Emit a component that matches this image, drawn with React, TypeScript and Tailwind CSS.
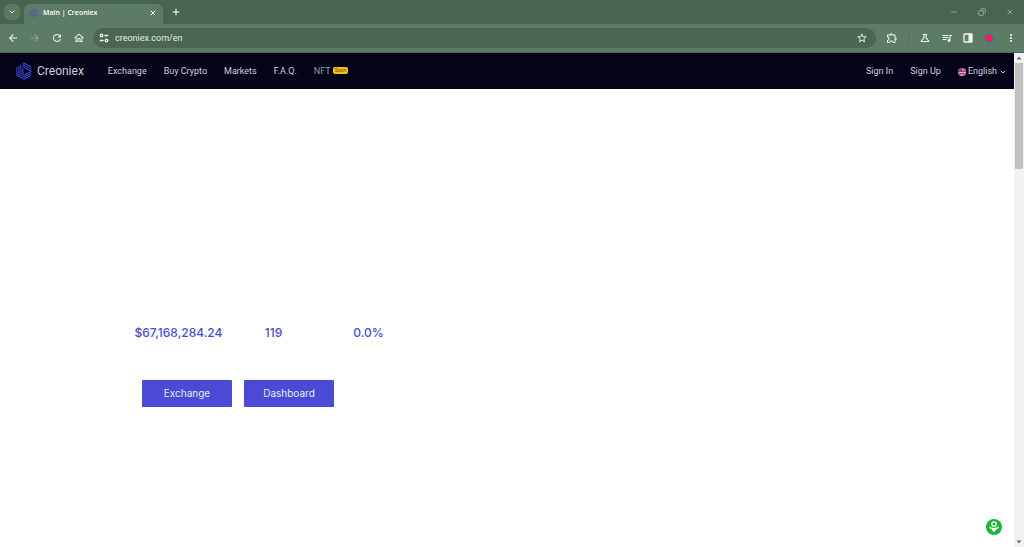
import React from "react";
import { ChevronDown, Copy, Minus, Plus, X } from "lucide-react";
import {
  MdArrowBack,
  MdArrowForward,
  MdMoreVert,
  MdOutlineExtension,
  MdOutlineHome,
  MdOutlineQueueMusic,
  MdOutlineScience,
  MdRefresh,
  MdStarOutline,
} from "react-icons/md";

function BrandMark({ className }: { className: string }) {
  return (
    <svg viewBox="0 0 18 20" className={className} fill="none" stroke="currentColor" strokeWidth="1.2" aria-hidden="true">
      <path d="M1 5.500v9l8 4.700M3.200 4.300v9.200l5.800 3.400M5.400 3v9.300l3.600 2.200M7.600 6.500v4.500l1.400.9" />
      <path d="M7.500 1.200 9 1l8 4.500M7.500 2.600l9.500 5.300M7.600 5l9.400 5.300" />
      <path d="M17 10.300l-8 4.500M17 12.600l-8 4.500M17 14.800l-8 4.500" />
    </svg>
  );
}

function TuneIcon() {
  return (
    <svg viewBox="0 0 12 12" className="size-2.5" fill="none" stroke="currentColor" strokeWidth="1.6" aria-hidden="true">
      <path d="M6.500 3H11M1 9h4.500" />
      <circle cx="3" cy="3" r="1.500" />
      <circle cx="9" cy="9" r="1.500" />
    </svg>
  );
}

function SidePanelIcon() {
  return (
    <svg viewBox="0 0 12 12" className="size-2.5" aria-hidden="true">
      <rect x="1.2" y="1.2" width="9.6" height="9.6" rx="1" fill="none" stroke="currentColor" strokeWidth="1.6" />
      <path d="M6.500 1h4.500v10H6.500z" fill="currentColor" />
    </svg>
  );
}

function FlagIcon() {
  return (
    <svg viewBox="0 0 16 16" className="size-2" aria-hidden="true">
      <circle cx="8" cy="8" r="8" fill="#e9a9ba" />
      <path d="M8 0a8 8 0 0 1 6.200 3H8zM8 5h7.400a8 8 0 0 1 .6 3H8zM.4 10h15.200a8 8 0 0 1-1.800 3H2.200A8 8 0 0 1 .4 10z" fill="#d62f55" />
      <path d="M8 0v8H0a8 8 0 0 1 8-8z" fill="#5a5596" />
    </svg>
  );
}

function TabStrip() {
  return (
    <div className="flex h-6 items-center bg-[#486552] pr-2">
      <button aria-label="Search tabs" className="ml-1 flex size-4 items-center justify-center rounded-md bg-[#5a7963]">
        <ChevronDown className="size-2" strokeWidth={3} />
      </button>
      <div className="ml-1 mt-1 flex h-5 w-[139px] items-center rounded-t-md bg-[#5d7c67] pb-0.5 pl-1.5 pr-1.5">
        <BrandMark className="h-2.5 w-2 text-[#4a55b4]" />
        <span className="ml-[5px] flex-1 text-[7px] font-semibold">Main | Creoniex</span>
        <button aria-label="Close tab"><X className="size-2" strokeWidth={3} /></button>
      </div>
      <button aria-label="New tab" className="ml-2"><Plus className="size-2.5" strokeWidth={2.5} /></button>
      <div className="ml-auto flex items-center gap-5 pr-0.5 text-[#b9c9be]">
        <button aria-label="Minimize"><Minus className="size-2" /></button>
        <button aria-label="Restore"><Copy className="size-2 -scale-x-100" strokeWidth={2} /></button>
        <button aria-label="Close window"><X className="size-2" /></button>
      </div>
    </div>
  );
}

function Toolbar() {
  return (
    <div className="flex h-7 items-center bg-[#5d7c67] text-[#f1f5f2]">
      <div className="flex items-center gap-2.5 pl-[7px]">
        <button aria-label="Back"><MdArrowBack className="size-3" /></button>
        <button aria-label="Forward" className="text-[#90a797]"><MdArrowForward className="size-3" /></button>
        <button aria-label="Reload"><MdRefresh className="size-3" /></button>
        <button aria-label="Home"><MdOutlineHome className="size-3" /></button>
      </div>
      <div className="ml-2 flex h-5 flex-1 items-center rounded-full bg-[#4b6754] pl-1.5 pr-2">
        <button aria-label="Site information"><TuneIcon /></button>
        <input aria-label="Address" defaultValue="creoniex.com/en" className="ml-1.5 min-w-0 flex-1 bg-transparent pt-px font-['Roboto',sans-serif] text-[9px] text-[#e4ece6] outline-none" />
        <button aria-label="Bookmark"><MdStarOutline className="size-3" /></button>
      </div>
      <div className="flex items-center gap-2.5 pl-2.5 pr-[7px]">
        <button aria-label="Extensions"><MdOutlineExtension className="size-3" /></button>
        <span className="h-3 w-px bg-[#536f5c]" />
        <button aria-label="Experiments"><MdOutlineScience className="size-3" /></button>
        <button aria-label="Media controls"><MdOutlineQueueMusic className="size-3" /></button>
        <button aria-label="Side panel"><SidePanelIcon /></button>
        <button aria-label="Profile" className="flex size-3 items-center justify-center rounded-full bg-[#2f8a84]">
          <span className="size-2 rounded-full bg-[#ee1d5a]" />
        </button>
        <button aria-label="Browser menu"><MdMoreVert className="size-3" /></button>
      </div>
    </div>
  );
}

function SiteHeader() {
  return (
    <header className="flex h-9 items-center bg-[#03041a] pl-4 pr-[7px] text-[9px] text-[#cfd0dc]">
      <a href="#home" className="flex items-center gap-[5px] text-xs">
        <BrandMark className="h-5 w-4 text-[#3f46c8]" />
        <span>Creoniex</span>
      </a>
      <nav className="ml-6 flex items-center gap-[17px] pt-0.5">
        <a href="#exchange">Exchange</a>
        <a href="#buy">Buy Crypto</a>
        <a href="#markets">Markets</a>
        <a href="#faq">F.A.Q.</a>
        <a href="#nft" className="flex items-center gap-0.5 text-[#9b9ca9]">
          NFT
          <span className="mb-1 rounded-xs bg-[#f0c419] px-0.5 text-[5px] leading-[7px] text-[#5c4b0c]">Soon</span>
        </a>
      </nav>
      <div className="ml-auto flex items-center gap-[17px] pt-0.5">
        <a href="#signin">Sign In</a>
        <a href="#signup">Sign Up</a>
        <button className="flex items-center gap-0.5">
          <FlagIcon />
          English
          <ChevronDown className="size-2" strokeWidth={3} />
        </button>
      </div>
    </header>
  );
}

const stats = ["$67,168,284.24", "119", "0.0%"];

function Hero() {
  return (
    <main className="flex-1 bg-white px-[131px] pt-[234px] font-['Inter',sans-serif]">
      <dl className="grid w-[285px] grid-cols-3">
        {stats.map((value) => (
          <dd key={value} className="text-center text-xs font-medium leading-5 text-[#4d4dcc]">{value}</dd>
        ))}
      </dl>
      <div className="ml-[11px] mt-[37px] flex gap-3 text-[10px] text-[#e9e9fb]">
        <button className="h-[27px] w-[90px] rounded-[1px] bg-[#4a4ad4]">Exchange</button>
        <button className="h-[27px] w-[90px] rounded-[1px] bg-[#4a4ad4]">Dashboard</button>
      </div>
    </main>
  );
}

function ScrollTrack() {
  return (
    <div className="flex w-2.5 flex-col items-center bg-[#f1f1f1] text-[#707070]" aria-hidden="true">
      <svg viewBox="0 0 10 10" className="size-2.5"><path d="M5 3.500 7.500 6.500h-5z" fill="currentColor" /></svg>
      <div className="h-[106px] w-2 bg-[#c1c1c1]" />
      <svg viewBox="0 0 10 10" className="mt-auto size-2.5"><path d="M5 6.500 2.500 3.500h5z" fill="currentColor" /></svg>
    </div>
  );
}

export default function App() {
  return (
    <div className="flex min-h-screen flex-col font-['Roboto',sans-serif] text-white">
      <div className="border-b border-[#486552] font-['Open_Sans',sans-serif]">
        <TabStrip />
        <Toolbar />
      </div>
      <div className="flex flex-1">
        <div className="flex min-w-0 flex-1 flex-col">
          <SiteHeader />
          <Hero />
        </div>
        <ScrollTrack />
      </div>
      <button aria-label="Open support" className="fixed bottom-3 right-[22px] size-4 rounded-full bg-[#19b637]">
        <svg viewBox="0 0 16 16" className="size-4" aria-hidden="true">
          <circle cx="8" cy="5" r="2.2" fill="none" stroke="#fff" strokeWidth="1.3" />
          <path d="M3 7.200c1.500 1.300 3.200 1.700 5 1.700s3.500-.4 5-1.700c-.3 1.700-1.300 2.600-2.500 3.100L8 13.500l-2.500-3.200C4.300 9.800 3.300 8.900 3 7.200z" fill="#fff" />
        </svg>
      </button>
    </div>
  );
}
